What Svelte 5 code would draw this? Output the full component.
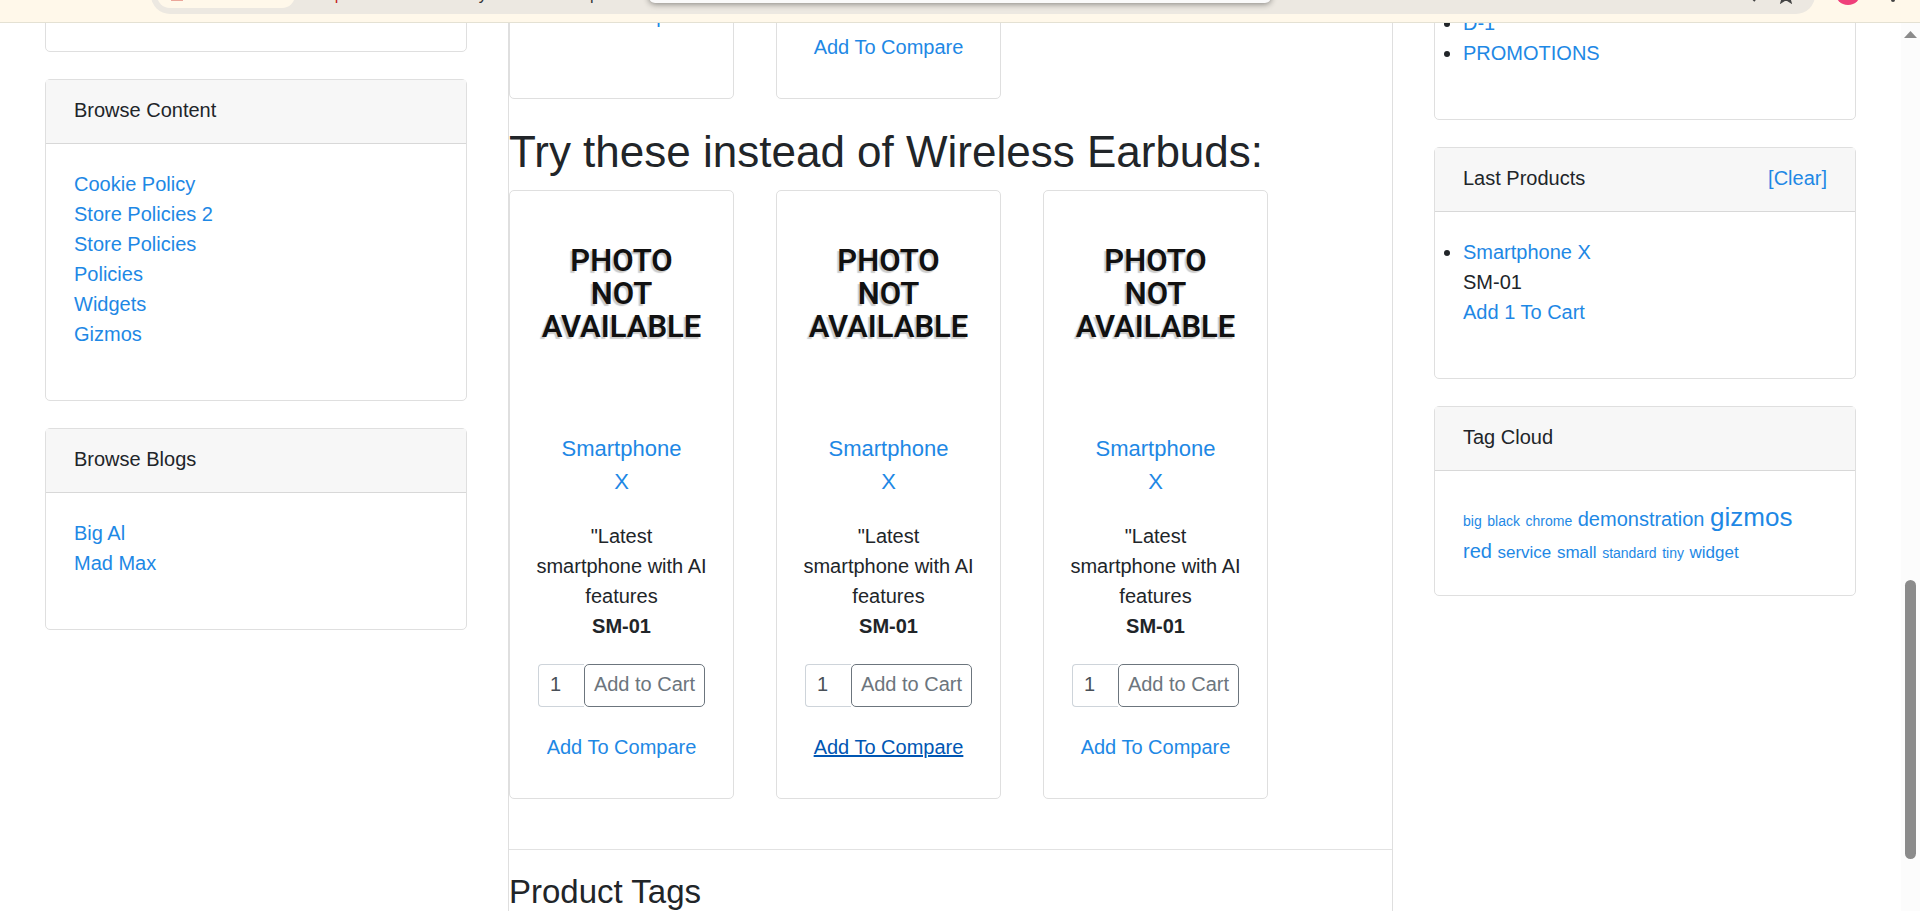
<script>
  const policies = ['Cookie Policy', 'Store Policies 2', 'Store Policies', 'Policies', 'Widgets', 'Gizmos'];
  const blogs = ['Big Al', 'Mad Max'];
  const products = [
    { id: 'a', hovered: false },
    { id: 'b', hovered: true },
    { id: 'c', hovered: false }
  ];
  const tags = [
    ['big', 'sm'], ['black', 'sm'], ['chrome', 'sm'], ['demonstration', 'lg'], ['gizmos', 'xl'],
    ['red', 'lg'], ['service', 'md'], ['small', 'md'], ['standard', 'sm'], ['tiny', 'sm'], ['widget', 'md']
  ];
  const scroll = { top: 62.7, size: 31.5 };
</script>

<div class="window">
  <header class="toolbar">
    <div class="address">
      <span class="chip">
        <svg width="12" height="12" viewBox="0 0 12 12"><path d="M6 1 11 11H1Z" fill="none" stroke="#e58a80" stroke-width="1.5" /></svg>
        Not secure
      </span>
      <span class="url"><span class="scheme">https</span>://latest.realitem.try/demo-market/product</span>
      <svg class="tool" width="18" height="18" viewBox="0 0 18 18"><path d="M11 3 5 9 11 15" fill="none" stroke="#444" stroke-width="2" /></svg>
      <svg class="tool" width="18" height="18" viewBox="0 0 18 18"><path d="M9 2l2 5 5 .4-4 3.4L13.5 16 9 13.200 4.500 16 6 10.800 2 7.400 7 7Z" fill="none" stroke="#444" stroke-width="2" /></svg>
    </div>
    <span class="avatar"></span>
    <span class="more"></span>
    <div class="popup"></div>
  </header>

  <div class="viewport">
    <div class="page">
      <aside class="column left">
        <section class="card stub"></section>
        <section class="card">
          <h2 class="card-head">Browse Content</h2>
          <ul class="links">
            {#each policies as name}<li><a href="#content">{name}</a></li>{/each}
          </ul>
        </section>
        <section class="card">
          <h2 class="card-head">Browse Blogs</h2>
          <ul class="links">
            {#each blogs as name}<li><a href="#blogs">{name}</a></li>{/each}
          </ul>
        </section>
      </aside>

      <main>
        <div class="products">
          <article class="card tail"><a href="#compare">Add To Compare</a></article>
          <article class="card tail late"><a href="#compare">Add To Compare</a></article>
        </div>
        <h1>Try these instead of Wireless Earbuds:</h1>
        <div class="products">
          {#each products as product (product.id)}
            <article class="card product">
              <div class="photo"><span>PHOTO</span><span>NOT</span><span>AVAILABLE</span></div>
              <a class="title" href="#product">Smartphone X</a>
              <p>"Latest<br />smartphone with AI<br />features<br /><strong>SM-01</strong></p>
              <form class="buy">
                <input type="text" value="1" aria-label="Quantity" />
                <button type="button">Add to Cart</button>
              </form>
              <a class:hovered={product.hovered} href="#compare">Add To Compare</a>
            </article>
          {/each}
        </div>
        <hr />
        <h2 class="section">Product Tags</h2>
      </main>

      <aside class="column right">
        <section class="card">
          <ul class="links bullets cut">
            <li><a href="#d1">D-1</a></li>
            <li><a href="#promotions">PROMOTIONS</a></li>
          </ul>
        </section>
        <section class="card">
          <h2 class="card-head">Last Products <a href="#clear">[Clear]</a></h2>
          <ul class="links bullets">
            <li><a href="#product">Smartphone X</a><br />SM-01<br /><a href="#cart">Add 1 To Cart</a></li>
          </ul>
        </section>
        <section class="card">
          <h2 class="card-head">Tag Cloud</h2>
          <div class="cloud">
            {#each tags as [name, size]}<a class={size} href="#tag">{name}</a>{' '}{/each}
          </div>
        </section>
      </aside>
    </div>
    <div class="track">
      <svg width="13" height="7" viewBox="0 0 13 7"><path d="M6.500 0 13 7H0Z" fill="#8b8b8b" /></svg>
      <div class="thumb" style="top: {scroll.top}%; height: {scroll.size}%"></div>
    </div>
  </div>
</div>

<style>
  :global(body) { margin: 0; overflow: hidden; }
  .window {
    height: 100vh;
    display: flex;
    flex-direction: column;
    overflow: hidden;
    background: #fff;
    color: #212529;
    font: 20px/30px "Liberation Sans", Arial, sans-serif;
  }
  .window * { box-sizing: border-box; }
  a { color: #1e88e5; text-decoration: none; }
  a:hover, a.hovered { color: #0056b3; text-decoration: underline; }

  .toolbar {
    position: relative;
    flex: none;
    height: 23px;
    display: flex;
    align-items: flex-start;
    overflow: hidden;
    background: #fff8ea;
    border-bottom: 1px solid #e4e1d3;
    padding: 0 25px 0 151px;
  }
  .address {
    flex: 1;
    height: 38px;
    margin-top: -24px;
    padding: 0 20px 0 6px;
    display: flex;
    align-items: center;
    border-radius: 19px;
    background: #ece8e1;
    font-size: 16px;
    line-height: 24px;
    color: #333;
  }
  .chip {
    display: flex;
    align-items: center;
    gap: 12px;
    width: 138px;
    height: 26px;
    padding-left: 14px;
    border-radius: 13px;
    background: #fff8ea;
    color: #e58a80;
  }
  .url { flex: 1; margin-left: 22px; }
  .scheme { color: #c5221f; }
  .tool { margin-left: 15px; }
  .avatar {
    width: 26px;
    height: 26px;
    margin: -21px 30px 0 20px;
    border-radius: 50%;
    background: #ef407b;
  }
  .more { width: 4px; height: 4px; margin-top: -2px; border-radius: 50%; background: #444; }
  .popup {
    position: absolute;
    top: -10px;
    left: 33.8%;
    width: 32.4%;
    height: 13px;
    border-radius: 6px;
    background: #fafafa;
    box-shadow: 0 1px 6px rgba(0, 0, 0, 0.45);
  }

  .viewport { flex: 1; min-height: 0; display: flex; overflow: hidden; }
  .page {
    flex: 1;
    display: grid;
    grid-template-columns: 422fr 885fr 422fr;
    gap: 41px;
    margin-top: -23px;
    padding: 0 45px;
  }
  .track { position: relative; width: 19px; padding: 8px 3px; background: #fcfcfc; }
  .track svg { display: block; }
  .thumb { position: absolute; left: 4px; width: 11px; border-radius: 6px; background: #8b8b8b; }

  .column { display: flex; flex-direction: column; gap: 27px; }
  .card { border: 1px solid #dfdfdf; border-radius: 5px; background: #fff; }
  .stub { height: 52px; }
  .card-head {
    display: flex;
    justify-content: space-between;
    margin: 0;
    padding: 15px 28px 18px;
    border-bottom: 1px solid #d8d8d8;
    background: #f7f7f7;
    font: inherit;
  }
  .links { margin: 0; padding: 25px 28px 51px; list-style: none; }
  .bullets { list-style: disc; }
  .cut { padding-top: 7px; }
  .cloud { padding: 31px 40px 27px 28px; }
  .sm { font-size: 14px; }
  .md { font-size: 17px; }
  .lg { font-size: 20px; }
  .xl { font-size: 26px; }

  main { border: solid #dfdfdf; border-width: 0 1px; }
  .products { display: grid; grid-template-columns: repeat(3, 225px); gap: 42px; }
  .tail { height: 99px; text-align: center; }
  .late { padding-top: 31px; }
  h1 { margin: 26px 0 11px; font-size: 44px; font-weight: 400; line-height: 54px; }
  .product {
    display: flex;
    flex-direction: column;
    align-items: center;
    padding: 28px 28px 36px;
    text-align: center;
  }
  .photo {
    height: 185px;
    margin-bottom: 28px;
    padding-top: 25px;
    color: #111;
    font: 600 31px/33px Roboto, sans-serif;
    text-shadow: -2px 2px 1px #ccc;
  }
  .photo span { display: block; }
  .title { width: 130px; font-size: 22px; line-height: 33px; }
  .product p { margin: 23px 0; white-space: nowrap; }
  .buy { display: flex; width: 100%; margin-bottom: 25px; }
  input {
    flex: 1;
    min-width: 0;
    height: 43px;
    padding: 0 11px 2px;
    border: 1px solid #ced4da;
    border-right-width: 0;
    border-radius: 4px 0 0 4px;
    background: #fff;
    color: #495057;
    font: inherit;
  }
  button {
    width: 121px;
    height: 43px;
    padding: 0 0 4px;
    border: 1px solid #6c757d;
    border-radius: 5px;
    background: #fff;
    color: #6c757d;
    font: inherit;
  }
  hr { margin: 50px 0 22px; border: 0; border-top: 1px solid #e2e2e2; }
  .section { margin: 0; font-size: 33px; font-weight: 400; line-height: 40px; }
</style>
